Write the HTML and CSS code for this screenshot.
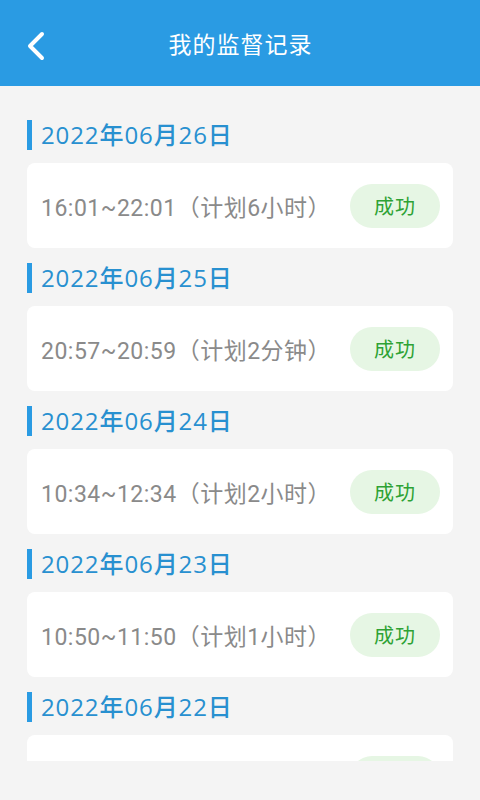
FILE: index.html
```html
<!DOCTYPE html>
<html lang="zh-CN">
<head>
  <meta charset="UTF-8">
  <meta name="viewport" content="width=device-width, initial-scale=1.0">
  <title>我的监督记录</title>
  <link rel="stylesheet" href="styles.css">
</head>
<body>
  <div class="header">
    <span class="back">
      <svg width="20" height="30" viewBox="0 0 20 30">
        <path d="M16 3 L4 15 L16 27" fill="none" stroke="#fff" stroke-width="4" stroke-linecap="round" stroke-linejoin="round"/>
      </svg>
    </span>
    <span class="title">我的监督记录</span>
  </div>

  <div class="list">
    <div class="group">
      <div class="date">2022年06月26日</div>
      <div class="card">
        <span class="time">16:01~22:01（计划6小时）</span>
        <span class="status">成功</span>
      </div>
    </div>
    <div class="group">
      <div class="date">2022年06月25日</div>
      <div class="card">
        <span class="time">20:57~20:59（计划2分钟）</span>
        <span class="status">成功</span>
      </div>
    </div>
    <div class="group">
      <div class="date">2022年06月24日</div>
      <div class="card">
        <span class="time">10:34~12:34（计划2小时）</span>
        <span class="status">成功</span>
      </div>
    </div>
    <div class="group">
      <div class="date">2022年06月23日</div>
      <div class="card">
        <span class="time">10:50~11:50（计划1小时）</span>
        <span class="status">成功</span>
      </div>
    </div>
    <div class="group">
      <div class="date">2022年06月22日</div>
      <!-- only the top of this card is visible before the list is clipped -->
      <div class="card">
        <span class="time"></span>
        <span class="status"></span>
      </div>
    </div>
  </div>
</body>
</html>
```

FILE: styles.css
```css
body {
  margin: 0;
  background-color: #f4f4f4;
  font-family: "Noto Sans CJK SC", "Noto Sans", sans-serif;
  height: 800px;
  overflow: hidden;
}
.header {
  height: 86px;
  background-color: #2a9be3;
  display: flex;
  align-items: center;
  justify-content: center;
  position: relative;
}
.back {
  position: absolute;
  left: 26px;
  top: 31px;
  display: flex;
}
.title {
  color: #fff;
  font-size: 23px;
  letter-spacing: 1px;
  margin-left: 1px;
}
.list {
  height: 675px;
  overflow: hidden;
  padding: 0 27px;
  box-sizing: border-box;
  padding-top: 34px;
}
.group {
  margin-bottom: 15px;
}
.date {
  height: 30px;
  display: flex;
  align-items: center;
  border-left: 5px solid #2a9be3;
  padding-left: 9px;
  color: #2890d0;
  font-family: "Open Sans", "Noto Sans CJK SC", sans-serif;
  font-weight: 500;
  font-size: 24px;
  letter-spacing: 0.9px;
  line-height: 26px;
  margin-bottom: 13px;
}
.card {
  height: 85px;
  background-color: #fff;
  border-radius: 8px;
  display: flex;
  align-items: center;
  justify-content: space-between;
  padding: 0 13px 0 14px;
}
.time {
  color: #8a8a8a;
  font-family: Roboto, "Noto Sans CJK SC", sans-serif;
  font-size: 23px;
  letter-spacing: 0.5px;
}
.status {
  width: 90px;
  height: 44px;
  border-radius: 22px;
  background-color: #e6f6e4;
  color: #2ea234;
  font-size: 20px;
  letter-spacing: 1px;
  display: flex;
  align-items: center;
  justify-content: center;
}
```
